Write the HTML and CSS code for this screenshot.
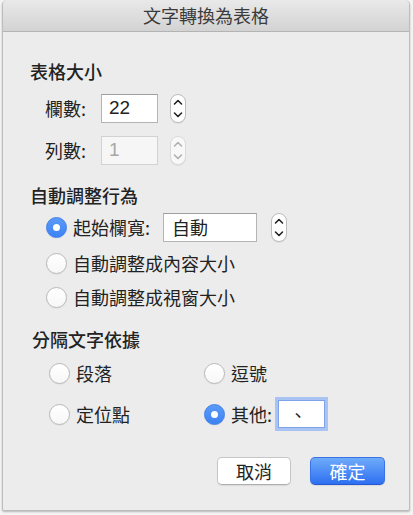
FILE: index.html
```html
<!DOCTYPE html>
<html lang="zh-Hant">
<head>
<meta charset="utf-8">
<link rel="stylesheet" href="styles.css">
</head>
<body>
<div class="window">
  <div class="titlebar">文字轉換為表格</div>
  <div class="content">
    <div class="heading h1">表格大小</div>
    <div class="row size-row r1">
      <span class="label">欄數:</span>
      <span class="field num">22</span>
      <span class="stepper"><svg width="16" height="29" viewBox="0 0 16 29"><path d="M4.5 10 L8 6.5 L11.5 10" fill="none" stroke="#222" stroke-width="1.6" stroke-linecap="round" stroke-linejoin="round"/><path d="M4.5 19 L8 22.5 L11.5 19" fill="none" stroke="#222" stroke-width="1.6" stroke-linecap="round" stroke-linejoin="round"/></svg></span>
    </div>
    <div class="row size-row r2">
      <span class="label">列數:</span>
      <span class="field num disabled">1</span>
      <span class="stepper disabled"><svg width="16" height="29" viewBox="0 0 16 29"><path d="M4.5 10 L8 6.5 L11.5 10" fill="none" stroke="#b0b0b0" stroke-width="1.6" stroke-linecap="round" stroke-linejoin="round"/><path d="M4.5 19 L8 22.5 L11.5 19" fill="none" stroke="#b0b0b0" stroke-width="1.6" stroke-linecap="round" stroke-linejoin="round"/></svg></span>
    </div>

    <div class="heading h2">自動調整行為</div>
    <div class="row opt-row o1">
      <span class="radio on"></span>
      <span class="opt-text">起始欄寬:</span>
      <span class="field wide">自動</span>
      <span class="stepper step2"><svg width="16" height="29" viewBox="0 0 16 29"><path d="M4.5 10 L8 6.5 L11.5 10" fill="none" stroke="#222" stroke-width="1.6" stroke-linecap="round" stroke-linejoin="round"/><path d="M4.5 19 L8 22.5 L11.5 19" fill="none" stroke="#222" stroke-width="1.6" stroke-linecap="round" stroke-linejoin="round"/></svg></span>
    </div>
    <div class="row opt-row o2">
      <span class="radio"></span>
      <span class="opt-text">自動調整成內容大小</span>
    </div>
    <div class="row opt-row o3">
      <span class="radio"></span>
      <span class="opt-text">自動調整成視窗大小</span>
    </div>

    <div class="heading h3">分隔文字依據</div>
    <div class="sep-grid">
      <div class="row cell c1"><span class="radio"></span><span class="opt-text">段落</span></div>
      <div class="row cell c1"><span class="radio"></span><span class="opt-text">逗號</span></div>
      <div class="row cell c2"><span class="radio"></span><span class="opt-text">定位點</span></div>
      <div class="row cell c2"><span class="radio on"></span><span class="opt-text">其他:</span><span class="field focus">、</span></div>
    </div>

    <div class="buttons">
      <span class="btn">取消</span>
      <span class="btn primary">確定</span>
    </div>
  </div>
</div>
</body>
</html>
```

FILE: styles.css
```css
html, body {
  margin: 0;
  padding: 0;
  background: #f4f4f4;
}
body {
  width: 413px;
  height: 515px;
  overflow: hidden;
  font-family: "Noto Sans CJK TC", "Liberation Sans", sans-serif;
  color: #222;
}
.window {
  margin-left: 2px;
  width: 406px;
  height: 510px;
  background: #ececec;
  border: 1px solid #bdbdbd;
  border-top: none;
  border-radius: 5px 5px 2px 2px;
  box-shadow: 0 1px 2px rgba(0,0,0,0.25);
  overflow: hidden;
}
.titlebar {
  height: 31px;
  border-bottom: 1px solid #b3b3b3;
  background: linear-gradient(#e9e9e9, #d3d3d3);
  text-align: center;
  font-size: 18px;
  line-height: 31px;
  color: #3b3b3b;
}
.content {
  display: flex;
  flex-direction: column;
}
.row {
  display: flex;
  align-items: center;
}
.heading {
  height: 24px;
  line-height: 24px;
  font-size: 18px;
  font-weight: 500;
  padding-left: 27px;
}
.h1 { margin-top: 27px; }
.h2 { margin-top: 18px; }
.h3 { margin-top: 15px; padding-left: 29px; }

.size-row {
  height: 30px;
  padding-left: 42px;
  font-size: 18px;
}
.r1 { margin-top: 10px; }
.r2 { margin-top: 12px; }
.label {
  width: 46px;
}

.field {
  box-sizing: border-box;
  height: 29px;
  background: #fff;
  border: 1px solid #b4b4b4;
  border-top-color: #9e9e9e;
  display: flex;
  align-items: center;
  font-size: 18px;
}
.num {
  width: 57px;
  margin-left: 10px;
  padding-left: 7px;
  font-family: "Liberation Sans", sans-serif;
  font-size: 19px;
}
.num.disabled {
  color: #a8a8a8;
  border-color: #d2d2d2;
  background: #f6f6f6;
}
.stepper {
  box-sizing: border-box;
  width: 16px;
  height: 29px;
  margin-left: 12px;
  border-radius: 8px;
  background: #fff;
  border: 1px solid #bcbcbc;
  box-shadow: 0 1px 0 rgba(0,0,0,0.06);
  display: flex;
  align-items: center;
  justify-content: center;
}
.stepper svg { display: block; flex: none; }
.stepper.disabled {
  border-color: #dadada;
  background: #f8f8f8;
}

.opt-row {
  height: 30px;
  padding-left: 43px;
  font-size: 18px;
}
.o1 { margin-top: 5px; }
.o2 { margin-top: 6px; }
.o3 { margin-top: 4px; }

.radio {
  box-sizing: border-box;
  width: 21px;
  height: 21px;
  flex: none;
  border-radius: 50%;
  background: linear-gradient(#ffffff, #f7f7f7);
  border: 1px solid #b9b9b9;
  box-shadow: 0 0.5px 1px rgba(0,0,0,0.08);
  display: flex;
  align-items: center;
  justify-content: center;
}
.radio.on {
  background: linear-gradient(#5a9bf8, #3d82f4);
  border-color: #3f7ee8;
}
.radio.on::after {
  content: "";
  width: 7px;
  height: 7px;
  border-radius: 50%;
  background: #fff;
}
.opt-text {
  margin-left: 6px;
}
.wide {
  width: 94px;
  margin-left: 13px;
  padding-left: 8px;
}
.step2 { margin-left: 14px; }

.sep-grid {
  display: grid;
  grid-template-columns: 155px 1fr;
  padding-left: 46px;
  font-size: 18px;
}
.cell { height: 30px; }
.c1 { margin-top: 7px; }
.c2 { margin-top: 8px; height: 36px; }
.focus {
  width: 47px;
  height: 28px;
  margin-left: 6px;
  border: 1px solid #7ea3ea;
  box-shadow: 0 0 0 3px #a9c4f3;
  padding-left: 10px;
  padding-bottom: 0;
  box-sizing: border-box;
  line-height: 1;
}

.buttons {
  display: flex;
  justify-content: flex-end;
  gap: 19px;
  padding-right: 24px;
  margin-top: 25px;
}
.btn {
  box-sizing: border-box;
  width: 74px;
  height: 28px;
  border-radius: 5px;
  background: #fff;
  border: 1px solid #c6c6c6;
  border-bottom-color: #aeaeae;
  box-shadow: 0 1px 1px rgba(0,0,0,0.08);
  display: flex;
  align-items: center;
  justify-content: center;
  font-size: 18px;
  color: #222;
}
.btn.primary {
  width: 75px;
  background: linear-gradient(#6eabfa, #2e6ff1);
  border-color: #3a73e6;
  border-bottom-color: #2459d3;
  color: #fff;
}
```
